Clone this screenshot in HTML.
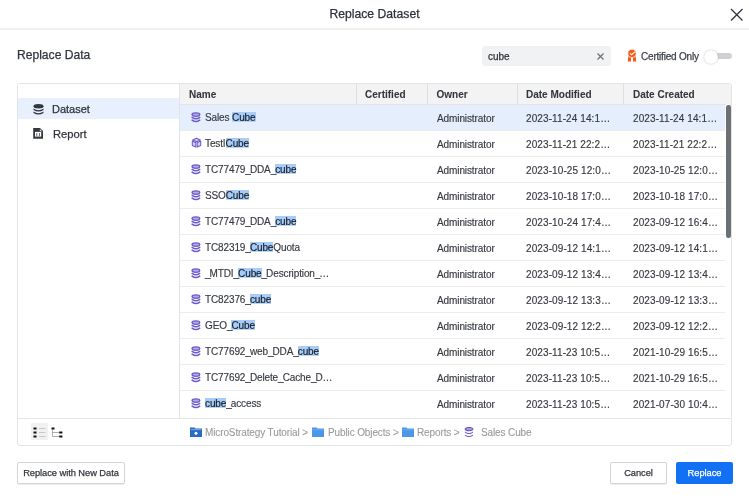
<!DOCTYPE html>
<html><head><meta charset="utf-8">
<style>
*{box-sizing:border-box;margin:0;padding:0}
html,body{width:749px;height:498px;overflow:hidden;background:#fff}
body{font-family:"Liberation Sans",sans-serif;color:#35393f;position:relative}
#wrap{position:absolute;left:0;top:0;width:749px;height:498px;will-change:transform;-webkit-text-stroke:0.25px}
.abs{position:absolute}
.title{position:absolute;left:0;top:0;width:749px;height:28px;line-height:28px;text-align:center;font-size:12.2px;color:#2c323a}
.hsep{position:absolute;left:0;top:28px;width:749px;height:2px;background:#f0f0f0}
.close{position:absolute;left:730px;top:7.5px}
.sub{position:absolute;left:17px;top:45px;line-height:20px;font-size:12.1px;color:#30363e}
.search{position:absolute;left:482px;top:46px;width:129px;height:20px;background:#f1f2f4;border-radius:3px;font-size:10px;line-height:21px;padding-left:6px;color:#2f3339}
.box{position:absolute;left:17px;top:83px;width:715px;height:363px;border:1px solid #e2e4e7;border-radius:3px;overflow:hidden}
.lsel{position:absolute;left:0;top:14px;width:161px;height:21px;background:#e7f0fc}
.litem{position:absolute;font-size:11px;line-height:21px;color:#2f3339}
.grid{position:absolute;left:161px;top:0;width:553px;height:334px;border-left:1px solid #e2e4e7}
.ghead{position:absolute;left:0;top:0;width:552px;height:21px;background:#f3f3f3;border-bottom:1px solid #e4e4e4}
.gh{position:absolute;top:0.5px;height:19px;line-height:19px;font-size:10px;font-weight:700;color:#32363c;-webkit-text-stroke:0.05px}
.vdiv{position:absolute;top:0;width:1px;height:20px;background:#dedede}
.row{position:absolute;left:180px;width:545px;height:26px;border-bottom:1px solid #ececec;font-size:10px;line-height:26px;color:#35393f;-webkit-text-stroke:0.15px}
.row.sel{background:#e5eefc}
.row.last{border-bottom:none}
.row>div{position:absolute;top:0;white-space:nowrap}
.c1{left:11px}
.c4{left:257px;letter-spacing:-0.1px;font-size:10px;top:1px!important}
.c5{left:346px;letter-spacing:0.1px;font-size:10px;top:1px!important}
.c6{left:453px;letter-spacing:0.1px;font-size:10px;top:1px!important}
.ic{position:absolute;top:7px;left:0}
.nm{position:absolute;left:14px;top:0;letter-spacing:-0.12px}
.u{letter-spacing:-1px}
.hl{background:linear-gradient(#a7ccf7,#a7ccf7) 0 -0.5px/100% 10.3px no-repeat;color:#151a24}
.foot{position:absolute;left:0;top:334px;width:713px;height:1px;background:#e6e6e6}
.crumb{position:absolute;font-size:10px;line-height:26px;color:#9a9a9a;top:420px;letter-spacing:-0.12px;-webkit-text-stroke:0.1px;white-space:nowrap}
.btn{position:absolute;top:462px;height:22px;border:1px solid #d4d4d4;border-radius:2px;background:#fff;font-size:9.3px;letter-spacing:-0.05px;line-height:21px;text-align:center;color:#33373d;box-shadow:0 1px 1px rgba(0,0,0,0.08)}
.btnp{position:absolute;top:462px;left:676px;width:57px;height:22px;border-radius:2px;background:#1170f4;color:#fff;font-size:9.3px;letter-spacing:-0.05px;line-height:22.5px;text-align:center}
</style></head><body><div id="wrap">
<div class="title">Replace Dataset</div>
<div class="hsep"></div>
<svg class="close" width="14" height="14" viewBox="0 0 14 14"><path d="M1 1 L12.5 12.5 M12.5 1 L1 12.5" stroke="#2d3540" stroke-width="1.3" fill="none"/></svg>
<div class="sub">Replace Data</div>
<div class="search">cube<svg style="position:absolute;left:115px;top:7px" width="7" height="7" viewBox="0 0 7 7"><path d="M0.5 0.5 L6.5 6.5 M6.5 0.5 L0.5 6.5" stroke="#6d7076" stroke-width="1.2"/></svg></div>
<svg class="abs" style="left:627px;top:49px" width="10" height="13" viewBox="0 0 10 13"><path d="M1.2 7.4 L4.3 7.4 L3.9 12.6 L0.8 12.6Z M5.7 7.4 L8.8 7.4 L9.2 12.6 L6.1 12.6Z" fill="#f65a14"/><circle cx="5" cy="4.4" r="4.1" fill="#f65a14" stroke="#fff" stroke-width="0.7"/><path d="M3.1 4.4 L4.6 5.7 L8.2 2.6" stroke="#fff" stroke-width="1.1" fill="none"/></svg>
<div class="abs" style="left:641px;top:47px;font-size:10px;letter-spacing:-0.2px;line-height:20px;color:#3a3e45">Certified Only</div>
<div class="abs" style="left:710px;top:53px;width:22px;height:6px;border-radius:3px;background:#cfd1d4"></div>
<div class="abs" style="left:704px;top:49.5px;width:14px;height:14px;border-radius:50%;background:#fff;box-shadow:0 0 1.5px rgba(0,0,0,0.35)"></div>

<div class="box">
  <div class="lsel"></div>
  <svg class="abs" style="left:15px;top:20px" width="11" height="11" viewBox="0 0 11 11"><ellipse cx="5.5" cy="2.3" rx="5" ry="2.2" fill="#33373d"/><path d="M0.5 4.6 Q5.5 7.8 10.5 4.6 L10.5 6 Q5.5 9.2 0.5 6Z" fill="#33373d"/><path d="M0.5 7.6 Q5.5 10.8 10.5 7.6 L10.5 9 Q5.5 12.2 0.5 9Z" fill="#33373d"/></svg>
  <div class="litem" style="left:34px;top:15px">Dataset</div>
  <svg class="abs" style="left:15px;top:44px" width="11" height="12" viewBox="0 0 11 12"><path d="M0.2 0 L7 0 L10 3 L10 10.7 L0.2 10.7Z" fill="#35393f"/><path d="M6.8 0.9 L9.1 3.2 L6.8 3.2Z" fill="#e0e0e0"/><rect x="2" y="3.9" width="6.2" height="4.7" fill="#fff"/><rect x="3.2" y="5" width="1.1" height="3.6" fill="#777"/><rect x="5.9" y="5" width="1.1" height="3.6" fill="#777"/></svg>
  <div class="litem" style="left:35px;top:40px;font-size:11.2px">Report</div>
  <div class="grid">
    <div class="ghead"></div>
    <div class="gh" style="left:9px">Name</div>
    <div class="vdiv" style="left:176px"></div>
    <div class="gh" style="left:185px">Certified</div>
    <div class="vdiv" style="left:247px"></div>
    <div class="gh" style="left:256.5px">Owner</div>
    <div class="vdiv" style="left:337px"></div>
    <div class="gh" style="left:346px">Date Modified</div>
    <div class="vdiv" style="left:443px"></div>
    <div class="gh" style="left:453px">Date Created</div>
  </div>
  <div class="foot"></div>
  <!-- footer icons -->
  <div class="abs" style="left:13px;top:339px;width:17px;height:17px;background:#f1f1f1;border-radius:1px"></div>
  <svg class="abs" style="left:15px;top:343px" width="14" height="11" viewBox="0 0 14 11"><rect x="0.5" y="0.5" width="3" height="2" fill="#111"/><rect x="0.5" y="4.5" width="3" height="2" fill="#111"/><rect x="0.5" y="8.5" width="3" height="2" fill="#111"/><rect x="6" y="1" width="6.5" height="1" fill="#c8c8c8"/><rect x="6" y="5" width="6.5" height="1" fill="#c8c8c8"/><rect x="6" y="9" width="6.5" height="1" fill="#c8c8c8"/></svg>
  <svg class="abs" style="left:33px;top:343px" width="12" height="12" viewBox="0 0 12 12"><rect x="0.5" y="0.5" width="3" height="2" fill="#111"/><path d="M1.5 2.5 L1.5 9.5 L8 9.5 M1.5 5.5 L8 5.5" stroke="#8a8a8a" stroke-width="0.7" fill="none"/><rect x="8.2" y="4.5" width="3.2" height="2" fill="#111"/><rect x="8.2" y="8.5" width="3.2" height="2" fill="#111"/></svg>
</div>
<div class="row sel" style="top:105px"><div class="c1"><svg class="ic" width="10" height="11" viewBox="0 0 10 11"><ellipse cx="4.9" cy="2.6" rx="3.9" ry="1.75" fill="#b2a6e8" stroke="#6c5ac6" stroke-width="1.25"/><path d="M1.1 5.4 Q4.9 8.1 8.7 5.4" fill="none" stroke="#6c5ac6" stroke-width="1.5" stroke-linecap="round"/><path d="M1.1 8.1 Q4.9 10.8 8.7 8.1" fill="none" stroke="#6c5ac6" stroke-width="1.5" stroke-linecap="round"/></svg><span class="nm">Sales <span class="hl">Cube</span></span></div><div class="c4">Administrator</div><div class="c5">2023-11-24 14:1…</div><div class="c6">2023-11-24 14:1…</div></div>
<div class="row" style="top:131px"><div class="c1"><svg class="ic" width="11" height="11" viewBox="0 0 11 11" style="top:6px;left:-0.5px"><g fill="#d9d2f4" stroke="#6c5ac6" stroke-width="1.05" stroke-linejoin="round"><path d="M5.5 1.3 L9.3 3.0 L5.5 4.7 L1.7 3.0Z"/><path d="M1.3 4.1 L4.8 5.7 L4.8 10 L1.3 8.4Z"/><path d="M9.7 4.1 L6.2 5.7 L6.2 10 L9.7 8.4Z"/></g></svg><span class="nm">TestI<span class="hl">Cube</span></span></div><div class="c4">Administrator</div><div class="c5">2023-11-21 22:2…</div><div class="c6">2023-11-21 22:2…</div></div>
<div class="row" style="top:157px"><div class="c1"><svg class="ic" width="10" height="11" viewBox="0 0 10 11"><ellipse cx="4.9" cy="2.6" rx="3.9" ry="1.75" fill="#b2a6e8" stroke="#6c5ac6" stroke-width="1.25"/><path d="M1.1 5.4 Q4.9 8.1 8.7 5.4" fill="none" stroke="#6c5ac6" stroke-width="1.5" stroke-linecap="round"/><path d="M1.1 8.1 Q4.9 10.8 8.7 8.1" fill="none" stroke="#6c5ac6" stroke-width="1.5" stroke-linecap="round"/></svg><span class="nm">TC77479<span class="u">_</span>DDA<span class="u">_</span><span class="hl">cube</span></span></div><div class="c4">Administrator</div><div class="c5">2023-10-25 12:0…</div><div class="c6">2023-10-25 12:0…</div></div>
<div class="row" style="top:183px"><div class="c1"><svg class="ic" width="10" height="11" viewBox="0 0 10 11"><ellipse cx="4.9" cy="2.6" rx="3.9" ry="1.75" fill="#b2a6e8" stroke="#6c5ac6" stroke-width="1.25"/><path d="M1.1 5.4 Q4.9 8.1 8.7 5.4" fill="none" stroke="#6c5ac6" stroke-width="1.5" stroke-linecap="round"/><path d="M1.1 8.1 Q4.9 10.8 8.7 8.1" fill="none" stroke="#6c5ac6" stroke-width="1.5" stroke-linecap="round"/></svg><span class="nm">SSO<span class="hl">Cube</span></span></div><div class="c4">Administrator</div><div class="c5">2023-10-18 17:0…</div><div class="c6">2023-10-18 17:0…</div></div>
<div class="row" style="top:209px"><div class="c1"><svg class="ic" width="10" height="11" viewBox="0 0 10 11"><ellipse cx="4.9" cy="2.6" rx="3.9" ry="1.75" fill="#b2a6e8" stroke="#6c5ac6" stroke-width="1.25"/><path d="M1.1 5.4 Q4.9 8.1 8.7 5.4" fill="none" stroke="#6c5ac6" stroke-width="1.5" stroke-linecap="round"/><path d="M1.1 8.1 Q4.9 10.8 8.7 8.1" fill="none" stroke="#6c5ac6" stroke-width="1.5" stroke-linecap="round"/></svg><span class="nm">TC77479<span class="u">_</span>DDA<span class="u">_</span><span class="hl">cube</span></span></div><div class="c4">Administrator</div><div class="c5">2023-10-24 17:4…</div><div class="c6">2023-09-12 16:4…</div></div>
<div class="row" style="top:235px"><div class="c1"><svg class="ic" width="10" height="11" viewBox="0 0 10 11"><ellipse cx="4.9" cy="2.6" rx="3.9" ry="1.75" fill="#b2a6e8" stroke="#6c5ac6" stroke-width="1.25"/><path d="M1.1 5.4 Q4.9 8.1 8.7 5.4" fill="none" stroke="#6c5ac6" stroke-width="1.5" stroke-linecap="round"/><path d="M1.1 8.1 Q4.9 10.8 8.7 8.1" fill="none" stroke="#6c5ac6" stroke-width="1.5" stroke-linecap="round"/></svg><span class="nm">TC82319<span class="u">_</span><span class="hl">Cube</span>Quota</span></div><div class="c4">Administrator</div><div class="c5">2023-09-12 14:1…</div><div class="c6">2023-09-12 14:1…</div></div>
<div class="row" style="top:261px"><div class="c1"><svg class="ic" width="10" height="11" viewBox="0 0 10 11"><ellipse cx="4.9" cy="2.6" rx="3.9" ry="1.75" fill="#b2a6e8" stroke="#6c5ac6" stroke-width="1.25"/><path d="M1.1 5.4 Q4.9 8.1 8.7 5.4" fill="none" stroke="#6c5ac6" stroke-width="1.5" stroke-linecap="round"/><path d="M1.1 8.1 Q4.9 10.8 8.7 8.1" fill="none" stroke="#6c5ac6" stroke-width="1.5" stroke-linecap="round"/></svg><span class="nm"><span class="u">_</span>MTDI<span class="u">_</span><span class="hl">Cube</span><span class="u">_</span>Description<span class="u">_</span>…</span></div><div class="c4">Administrator</div><div class="c5">2023-09-12 13:4…</div><div class="c6">2023-09-12 13:4…</div></div>
<div class="row" style="top:287px"><div class="c1"><svg class="ic" width="10" height="11" viewBox="0 0 10 11"><ellipse cx="4.9" cy="2.6" rx="3.9" ry="1.75" fill="#b2a6e8" stroke="#6c5ac6" stroke-width="1.25"/><path d="M1.1 5.4 Q4.9 8.1 8.7 5.4" fill="none" stroke="#6c5ac6" stroke-width="1.5" stroke-linecap="round"/><path d="M1.1 8.1 Q4.9 10.8 8.7 8.1" fill="none" stroke="#6c5ac6" stroke-width="1.5" stroke-linecap="round"/></svg><span class="nm">TC82376<span class="u">_</span><span class="hl">cube</span></span></div><div class="c4">Administrator</div><div class="c5">2023-09-12 13:3…</div><div class="c6">2023-09-12 13:3…</div></div>
<div class="row" style="top:313px"><div class="c1"><svg class="ic" width="10" height="11" viewBox="0 0 10 11"><ellipse cx="4.9" cy="2.6" rx="3.9" ry="1.75" fill="#b2a6e8" stroke="#6c5ac6" stroke-width="1.25"/><path d="M1.1 5.4 Q4.9 8.1 8.7 5.4" fill="none" stroke="#6c5ac6" stroke-width="1.5" stroke-linecap="round"/><path d="M1.1 8.1 Q4.9 10.8 8.7 8.1" fill="none" stroke="#6c5ac6" stroke-width="1.5" stroke-linecap="round"/></svg><span class="nm">GEO<span class="u">_</span><span class="hl">Cube</span></span></div><div class="c4">Administrator</div><div class="c5">2023-09-12 12:2…</div><div class="c6">2023-09-12 12:2…</div></div>
<div class="row" style="top:339px"><div class="c1"><svg class="ic" width="10" height="11" viewBox="0 0 10 11"><ellipse cx="4.9" cy="2.6" rx="3.9" ry="1.75" fill="#b2a6e8" stroke="#6c5ac6" stroke-width="1.25"/><path d="M1.1 5.4 Q4.9 8.1 8.7 5.4" fill="none" stroke="#6c5ac6" stroke-width="1.5" stroke-linecap="round"/><path d="M1.1 8.1 Q4.9 10.8 8.7 8.1" fill="none" stroke="#6c5ac6" stroke-width="1.5" stroke-linecap="round"/></svg><span class="nm">TC77692<span class="u">_</span>web<span class="u">_</span>DDA<span class="u">_</span><span class="hl">cube</span></span></div><div class="c4">Administrator</div><div class="c5">2023-11-23 10:5…</div><div class="c6">2021-10-29 16:5…</div></div>
<div class="row" style="top:365px"><div class="c1"><svg class="ic" width="10" height="11" viewBox="0 0 10 11"><ellipse cx="4.9" cy="2.6" rx="3.9" ry="1.75" fill="#b2a6e8" stroke="#6c5ac6" stroke-width="1.25"/><path d="M1.1 5.4 Q4.9 8.1 8.7 5.4" fill="none" stroke="#6c5ac6" stroke-width="1.5" stroke-linecap="round"/><path d="M1.1 8.1 Q4.9 10.8 8.7 8.1" fill="none" stroke="#6c5ac6" stroke-width="1.5" stroke-linecap="round"/></svg><span class="nm">TC77692<span class="u">_</span>Delete<span class="u">_</span>Cache<span class="u">_</span>D…</span></div><div class="c4">Administrator</div><div class="c5">2023-11-23 10:5…</div><div class="c6">2021-10-29 16:5…</div></div>
<div class="row last" style="top:391px"><div class="c1"><svg class="ic" width="10" height="11" viewBox="0 0 10 11"><ellipse cx="4.9" cy="2.6" rx="3.9" ry="1.75" fill="#b2a6e8" stroke="#6c5ac6" stroke-width="1.25"/><path d="M1.1 5.4 Q4.9 8.1 8.7 5.4" fill="none" stroke="#6c5ac6" stroke-width="1.5" stroke-linecap="round"/><path d="M1.1 8.1 Q4.9 10.8 8.7 8.1" fill="none" stroke="#6c5ac6" stroke-width="1.5" stroke-linecap="round"/></svg><span class="nm"><span class="hl">cube</span><span class="u">_</span>access</span></div><div class="c4">Administrator</div><div class="c5">2023-11-23 10:5…</div><div class="c6">2021-07-30 10:4…</div></div>
<!-- scrollbar -->
<div class="abs" style="left:725px;top:104px;width:6px;height:135px;border-radius:3px;background:#fff"></div>
<div class="abs" style="left:726px;top:105px;width:4.5px;height:133px;border-radius:2.25px;background:#6c7073"></div>

<!-- breadcrumb -->
<svg class="abs" style="left:190px;top:427px" width="12" height="10" viewBox="0 0 12 10"><path d="M0 0.5 L4.5 0.5 L5.5 1.5 L12 1.5 L12 10 L0 10Z" fill="#2a6cc2"/><rect x="0.8" y="2.3" width="10.4" height="0.8" fill="#8fb5e6"/><circle cx="6" cy="6.3" r="1.5" fill="#fff"/></svg>
<div class="crumb" style="left:205px">MicroStrategy Tutorial &gt;</div>
<svg class="abs" style="left:312px;top:427px" width="12" height="10" viewBox="0 0 12 10"><path d="M0 0.5 L4.5 0.5 L5.5 1.5 L12 1.5 L12 10 L0 10Z" fill="#4a97ea"/><rect x="0" y="2.6" width="12" height="0.6" fill="#7fb6f2"/></svg>
<div class="crumb" style="left:328px">Public Objects &gt;</div>
<svg class="abs" style="left:402px;top:427px" width="12" height="10" viewBox="0 0 12 10"><path d="M0 0.5 L4.5 0.5 L5.5 1.5 L12 1.5 L12 10 L0 10Z" fill="#4a97ea"/><rect x="0" y="2.6" width="12" height="0.6" fill="#7fb6f2"/></svg>
<div class="crumb" style="left:417px">Reports &gt;</div>
<svg class="abs" style="left:464px;top:427px" width="10" height="10" viewBox="0 0 9 10"><ellipse cx="4.5" cy="2.1" rx="3.9" ry="1.6" fill="#a89be0" stroke="#6652c0" stroke-width="1.1"/><path d="M0.4 4.6 Q4.5 7.6 8.6 4.6 L8.6 5.6 Q4.5 8.6 0.4 5.6Z" fill="#6652c0"/><path d="M0.4 7.4 Q4.5 10.4 8.6 7.4 L8.6 8.4 Q4.5 11.4 0.4 8.4Z" fill="#6652c0"/></svg>
<div class="crumb" style="left:481px">Sales Cube</div>

<div class="btn" style="left:17px;width:108px">Replace with New Data</div>
<div class="btn" style="left:610px;width:57px">Cancel</div>
<div class="btnp">Replace</div>
</div></body></html>
